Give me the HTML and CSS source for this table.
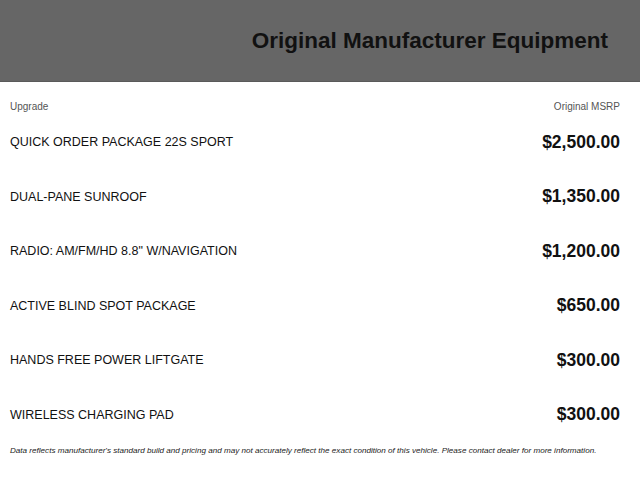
FILE: index.html
```html
<!DOCTYPE html>
<html>
<head>
<meta charset="utf-8">
<link rel="stylesheet" href="styles.css">
</head>
<body>
<header class="banner">
  <h1 class="title">Original Manufacturer Equipment</h1>
</header>
<main class="content">
  <div class="cols">
    <span>Upgrade</span>
    <span>Original MSRP</span>
  </div>
  <ul class="list">
    <li class="row"><span class="name">QUICK ORDER PACKAGE 22S SPORT</span><span class="price">$2,500.00</span></li>
    <li class="row"><span class="name">DUAL-PANE SUNROOF</span><span class="price">$1,350.00</span></li>
    <li class="row"><span class="name">RADIO: AM/FM/HD 8.8" W/NAVIGATION</span><span class="price">$1,200.00</span></li>
    <li class="row"><span class="name">ACTIVE BLIND SPOT PACKAGE</span><span class="price">$650.00</span></li>
    <li class="row"><span class="name">HANDS FREE POWER LIFTGATE</span><span class="price">$300.00</span></li>
    <li class="row"><span class="name">WIRELESS CHARGING PAD</span><span class="price">$300.00</span></li>
  </ul>
  <p class="note">Data reflects manufacturer's standard build and pricing and may not accurately reflect the exact condition of this vehicle. Please contact dealer for more information.</p>
</main>
</body>
</html>
```
FILE: styles.css
```css
html, body {
  margin: 0;
  padding: 0;
  background: #fff;
  font-family: "Liberation Sans", Arial, sans-serif;
}
.banner {
  height: 81px;
  background: #666666;
  border-bottom: 1px solid #5a5a5a;
  display: flex;
  align-items: center;
  justify-content: flex-end;
  padding-right: 32px;
}
.title {
  margin: 0;
  font-size: 22.5px;
  font-weight: bold;
  color: #111;
}
.content {
  padding: 0 20px 0 10px;
}
.cols {
  display: flex;
  justify-content: space-between;
  font-size: 10px;
  color: #555;
  padding-top: 18px;
  height: 15px;
  line-height: 13px;
}
.list {
  list-style: none;
  margin: 0;
  padding: 0;
}
.row {
  height: 54.5px;
  display: flex;
  align-items: center;
  justify-content: space-between;
}
.name {
  font-size: 12.5px;
  color: #111;
}
.price {
  font-size: 17.5px;
  font-weight: bold;
  color: #111;
}
.note {
  margin: 4px 0 0;
  font-size: 8.1px;
  font-style: italic;
  color: #222;
  white-space: nowrap;
}
```
